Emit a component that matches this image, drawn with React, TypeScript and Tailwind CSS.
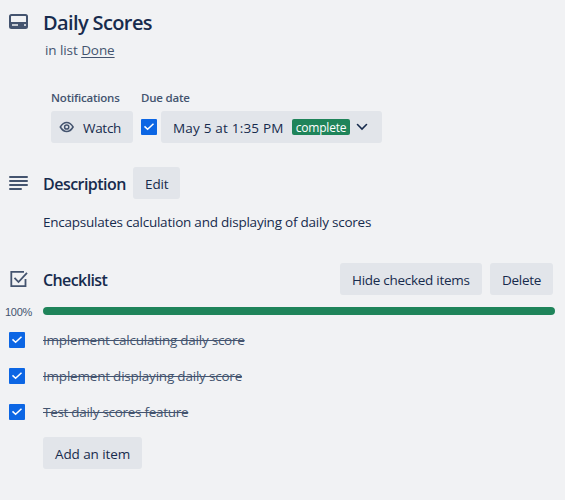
import type { ReactNode } from "react";

function Tick({ className = "" }: { className?: string }) {
  return (
    <span role="checkbox" aria-checked="true" className={`flex h-4 w-4 shrink-0 items-center justify-center rounded-[1px] bg-[#0c66e4] ${className}`}>
      <svg width="16" height="16" viewBox="0 0 16 16" fill="none" stroke="#fff" strokeWidth="1.5">
        <path d="m3.5 7.4 3.1 2.9 5.9-5.6" />
      </svg>
    </span>
  );
}

function Button({ children, className = "" }: { children: ReactNode; className?: string }) {
  return (
    <button className={`flex h-8 shrink-0 items-center whitespace-nowrap rounded-[3px] bg-[#e2e5ea] text-left text-[#172b4d] ${className}`}>
      {children}
    </button>
  );
}

const items = [
  { text: "Implement calculating daily score", tracking: "tracking-[-0.24px]" },
  { text: "Implement displaying daily score", tracking: "tracking-[-0.21px]" },
  { text: "Test daily scores feature", tracking: "tracking-[-0.29px]" },
];

export default function App() {
  return (
    <main className="h-[500px] w-[565px] overflow-hidden bg-[#f1f2f4] font-['Open_Sans','Noto_Sans',sans-serif] text-[13.5px] leading-5 text-[#172b4d]">
      <header className="flex h-[88px] pt-[11px]">
        <svg className="ml-[9px] mt-[3px] shrink-0" width="19" height="16" viewBox="0 0 19 16">
          <rect x="1" y="1" width="17" height="13" rx="1.5" fill="none" stroke="#44546f" strokeWidth="2" />
          <path d="M1 8h17v5a1 1 0 0 1-1 1H2a1 1 0 0 1-1-1z" fill="#44546f" />
          <path d="M3 11h6M15 11h2" stroke="#f1f2f4" strokeWidth="1.6" />
        </svg>
        <div className="ml-[15px]">
          <h1 className="whitespace-nowrap text-[20px] font-semibold leading-6 tracking-[-0.62px]">Daily Scores</h1>
          <p className="ml-[2px] mt-[5px] whitespace-nowrap tracking-[-0.08px] text-[#44546f]">
            in list <a className="underline underline-offset-2">Done</a>
          </p>
        </div>
      </header>

      <section className="flex gap-2 pl-[51px]">
        <div className="w-[82px]">
          <h3 className="h-[23px] whitespace-nowrap pt-[2px] text-[11.5px] font-semibold leading-4 tracking-[-0.2px] text-[#44546f]">Notifications</h3>
          <Button className="w-[82px] pl-2 tracking-[-0.3px]">
            <svg width="16" height="16" viewBox="0 0 16 16" fill="none" stroke="#44546f" strokeWidth="1.5">
              <path d="M1.3 8Q4 3.5 7.7 3.5T14.1 8Q11.4 12.5 7.7 12.5T1.3 8Z" />
              <circle cx="7.7" cy="8" r="2.1" />
            </svg>
            <span className="ml-2 pt-[2px]">Watch</span>
          </Button>
        </div>
        <div>
          <h3 className="h-[23px] whitespace-nowrap pt-[2px] text-[11.5px] font-semibold leading-4 tracking-[-0.2px] text-[#44546f]">Due date</h3>
          <div className="flex items-center gap-1">
            <Tick />
            <Button className="w-[221px] pl-3 tracking-[0.2px]">
              <span className="w-[119px] pt-[2px]">May 5 at 1:35 PM</span>
              <span className="flex h-4 w-[58px] items-center justify-center rounded-[2px] bg-[#1f845a] pt-px text-xs leading-4 tracking-[-0.2px] text-white">complete</span>
              <svg className="ml-[6px]" width="12" height="8" viewBox="0 0 12 8" fill="none" stroke="#172b4d" strokeWidth="1.6" strokeLinecap="round">
                <path d="m1.5 1.5 4.5 4.5 4.5-4.5" />
              </svg>
            </Button>
          </div>
        </div>
      </section>

      <section className="mt-6">
        <div className="flex h-8 items-center">
          <svg className="ml-[9px] shrink-0" width="19" height="16" viewBox="0 0 19 16" stroke="#44546f" strokeWidth="2" strokeLinecap="round">
            <path d="M1 2h17M1 6h17M1 10h17M1 14h11" />
          </svg>
          <h2 className="ml-[15px] w-[90px] whitespace-nowrap pt-[2px] text-base font-semibold tracking-[-0.53px]">Description</h2>
          <Button className="w-[47px] pl-3 pt-[2px] tracking-[-0.1px]">Edit</Button>
        </div>
        <p className="mt-[13px] whitespace-nowrap pl-[43px] tracking-[-0.23px]">Encapsulates calculation and displaying of daily scores</p>
      </section>

      <section className="mt-[31px]">
        <div className="flex h-8 items-center">
          <svg className="ml-[10px] shrink-0" width="18" height="18" viewBox="0 0 18 18" fill="none" stroke="#44546f" strokeWidth="1.8">
            <path d="M14 1.9H1.3v14.2h14.2V9" />
            <path d="m4.5 7.8 4 4.2L17 2.8" />
          </svg>
          <h2 className="ml-[15px] flex-1 whitespace-nowrap pt-[2px] text-base font-semibold tracking-[-0.6px]">Checklist</h2>
          <div className="mr-3 flex gap-2">
            <Button className="w-[142px] pl-3 pt-[2px] tracking-[-0.28px]">Hide checked items</Button>
            <Button className="w-[63px] pl-3 pt-[2px] tracking-[-0.28px]">Delete</Button>
          </div>
        </div>
        <div className="mt-3 flex h-2 items-center">
          <span className="w-[43px] pl-[5px] pt-[2px] font-['Liberation_Sans',Arial,sans-serif] text-[11px] tracking-[-0.3px] text-[#44546f]">100%</span>
          <div className="h-2 w-[512px] rounded-full bg-[#1f845a]" />
        </div>
        <ul className="mt-[7px]">
          {items.map((item) => (
            <li key={item.text} className="flex h-9 items-center">
              <Tick className="ml-[9px]" />
              <span className={`ml-[18px] whitespace-nowrap text-[#44546f] line-through ${item.tracking}`}>{item.text}</span>
            </li>
          ))}
        </ul>
        <Button className="ml-[43px] mt-[7px] w-[99px] pl-3 pt-[2px] tracking-[-0.1px]">Add an item</Button>
      </section>
    </main>
  );
}
